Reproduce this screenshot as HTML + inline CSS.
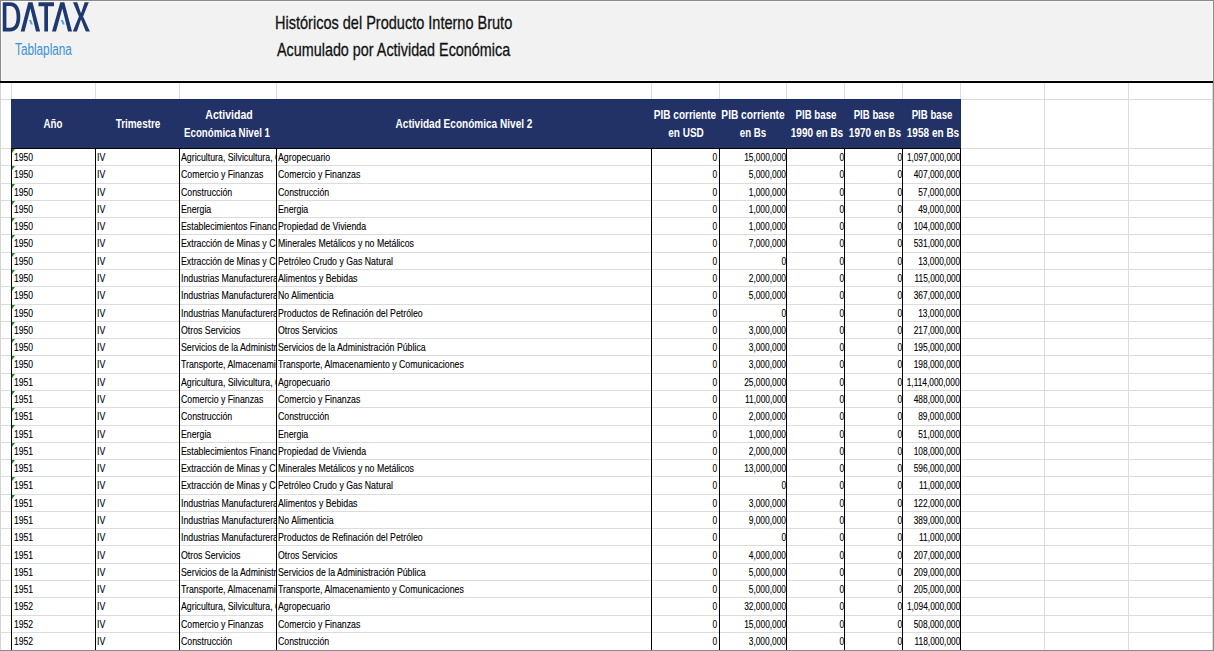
<!DOCTYPE html><html><head><meta charset="utf-8"><style>
*{margin:0;padding:0;box-sizing:border-box}
html,body{width:1214px;height:651px;overflow:hidden;background:#fff}
body{position:relative;font-family:"Liberation Sans",sans-serif;color:#000}
.a{position:absolute}
.hl{position:absolute;height:1px}
.vl{position:absolute;width:1px}
.c{position:absolute;overflow:hidden;white-space:nowrap}
.t{display:inline-block;white-space:nowrap}
.d .t{-webkit-text-stroke:0.12px #000}
.L .t{transform-origin:0 50%}
.R .t{position:absolute;right:0;top:0;transform-origin:100% 50%}
.C .t{position:absolute;left:50%;top:0;transform-origin:0 50%}
</style></head><body>

<div class="a" style="left:0;top:0;width:1214px;height:81px;background:#f2f2f2"></div>
<div class="a" style="left:0;top:0;width:1214px;height:1px;background:#8a8a8a"></div>
<div class="a" style="left:1px;top:1px;width:1212px;height:1px;background:#fbfbfb"></div>
<div class="a" style="left:0;top:0;width:1px;height:81px;background:#8a8a8a"></div>
<div class="a" style="left:1px;top:1px;width:1px;height:80px;background:#fbfbfb"></div>
<div class="a" style="left:1px;top:80px;width:1212px;height:1px;background:#fbfbfb"></div>
<div class="a" style="left:1212px;top:1px;width:1px;height:80px;background:#fbfbfb"></div>
<div class="a" style="left:0;top:81px;width:1214px;height:2px;background:#000"></div>
<svg class="a" style="left:0;top:0" width="100" height="40" viewBox="0 0 100 40">
<g fill="#1f386f">
<path d="M2.8 2.2 H10 C17 2.2 20.3 8 20.3 16.9 C20.3 25.8 17 31.5 10 31.5 H2.8 Z M6.4 6 V27.7 H10 C14.6 27.7 16.6 23.5 16.6 16.9 C16.6 10.2 14.6 6 10 6 Z"/>
<path d="M28.3 2.2 H32.5 L40.1 31.5 H36 L30.4 8.5 L24.6 31.5 H20.7 Z"/>
<path d="M38.5 2.2 H54 V6.3 H48 V31.5 H44.3 V6.3 H38.5 Z"/>
<path d="M60.3 2.2 H64.3 L72 31.5 H68 L62.3 8.5 L56 31.5 H52 Z"/>
<path d="M73 2.2 H77.2 L81 13.3 L84.7 2.2 H88.8 L83.1 16.5 L89.9 31.5 H85.8 L81 19.6 L76.9 31.5 H72.8 L78.9 16.5 Z"/>
</g>
<g fill="#3aa3e6">
<path d="M29.0 20.0 L31.0 20.0 L32.9 24.5 L30.9 24.5 Z"/>
<path d="M60.9 20.0 L62.9 20.0 L64.7 24.6 L62.7 24.6 Z"/>
</g>
</svg>
<div class="c L" style="left:15px;top:42.26px;width:120px;height:16.00px;line-height:16px;font-size:16px;color:#3b93d3;overflow:visible;"><span class="t" style="transform:scaleX(0.735)">Tablaplana</span></div>
<div class="c L" style="left:275px;top:12.72px;width:400px;height:19.00px;line-height:19px;font-size:19px;color:#111;overflow:visible;-webkit-text-stroke:0.3px #111;"><span class="t" style="transform:scaleX(0.764)">Históricos del Producto Interno Bruto</span></div>
<div class="c L" style="left:277px;top:40.02px;width:400px;height:19.00px;line-height:19px;font-size:19px;color:#111;overflow:visible;-webkit-text-stroke:0.3px #111;"><span class="t" style="transform:scaleX(0.756)">Acumulado por Actividad Económica</span></div>
<div class="hl" style="left:1px;top:99px;width:1212px;background:#dcdcdc"></div>
<div class="hl" style="left:1px;top:148px;width:1212px;background:#dcdcdc"></div>
<div class="hl" style="left:1px;top:165px;width:1212px;background:#dcdcdc"></div>
<div class="hl" style="left:1px;top:183px;width:1212px;background:#dcdcdc"></div>
<div class="hl" style="left:1px;top:200px;width:1212px;background:#dcdcdc"></div>
<div class="hl" style="left:1px;top:217px;width:1212px;background:#dcdcdc"></div>
<div class="hl" style="left:1px;top:234px;width:1212px;background:#dcdcdc"></div>
<div class="hl" style="left:1px;top:252px;width:1212px;background:#dcdcdc"></div>
<div class="hl" style="left:1px;top:269px;width:1212px;background:#dcdcdc"></div>
<div class="hl" style="left:1px;top:286px;width:1212px;background:#dcdcdc"></div>
<div class="hl" style="left:1px;top:304px;width:1212px;background:#dcdcdc"></div>
<div class="hl" style="left:1px;top:321px;width:1212px;background:#dcdcdc"></div>
<div class="hl" style="left:1px;top:338px;width:1212px;background:#dcdcdc"></div>
<div class="hl" style="left:1px;top:355px;width:1212px;background:#dcdcdc"></div>
<div class="hl" style="left:1px;top:373px;width:1212px;background:#dcdcdc"></div>
<div class="hl" style="left:1px;top:390px;width:1212px;background:#dcdcdc"></div>
<div class="hl" style="left:1px;top:407px;width:1212px;background:#dcdcdc"></div>
<div class="hl" style="left:1px;top:425px;width:1212px;background:#dcdcdc"></div>
<div class="hl" style="left:1px;top:442px;width:1212px;background:#dcdcdc"></div>
<div class="hl" style="left:1px;top:459px;width:1212px;background:#dcdcdc"></div>
<div class="hl" style="left:1px;top:476px;width:1212px;background:#dcdcdc"></div>
<div class="hl" style="left:1px;top:494px;width:1212px;background:#dcdcdc"></div>
<div class="hl" style="left:1px;top:511px;width:1212px;background:#dcdcdc"></div>
<div class="hl" style="left:1px;top:528px;width:1212px;background:#dcdcdc"></div>
<div class="hl" style="left:1px;top:545px;width:1212px;background:#dcdcdc"></div>
<div class="hl" style="left:1px;top:563px;width:1212px;background:#dcdcdc"></div>
<div class="hl" style="left:1px;top:580px;width:1212px;background:#dcdcdc"></div>
<div class="hl" style="left:1px;top:597px;width:1212px;background:#dcdcdc"></div>
<div class="hl" style="left:1px;top:615px;width:1212px;background:#dcdcdc"></div>
<div class="hl" style="left:1px;top:632px;width:1212px;background:#dcdcdc"></div>
<div class="vl" style="left:11px;top:83px;height:567px;background:#dcdcdc"></div>
<div class="vl" style="left:95px;top:83px;height:567px;background:#dcdcdc"></div>
<div class="vl" style="left:179px;top:83px;height:567px;background:#dcdcdc"></div>
<div class="vl" style="left:276px;top:83px;height:567px;background:#dcdcdc"></div>
<div class="vl" style="left:651px;top:83px;height:567px;background:#dcdcdc"></div>
<div class="vl" style="left:719px;top:83px;height:567px;background:#dcdcdc"></div>
<div class="vl" style="left:786px;top:83px;height:567px;background:#dcdcdc"></div>
<div class="vl" style="left:844px;top:83px;height:567px;background:#dcdcdc"></div>
<div class="vl" style="left:902px;top:83px;height:567px;background:#dcdcdc"></div>
<div class="vl" style="left:960px;top:83px;height:567px;background:#dcdcdc"></div>
<div class="vl" style="left:1044px;top:83px;height:567px;background:#dcdcdc"></div>
<div class="vl" style="left:1128px;top:83px;height:567px;background:#dcdcdc"></div>
<div class="vl" style="left:1212px;top:83px;height:567px;background:#dcdcdc"></div>
<div class="a" style="left:11px;top:99px;width:950px;height:49px;background:#223267"></div>
<div class="a" style="left:11px;top:99px;width:950px;height:1px;background:#1a2b63"></div>
<div class="a" style="left:960px;top:99px;width:1px;height:49px;background:#1a2b63"></div>
<div class="a" style="left:11px;top:148px;width:950px;height:1px;background:#000"></div>
<div class="vl" style="left:11px;top:148px;height:502px;background:#000"></div>
<div class="vl" style="left:95px;top:148px;height:502px;background:#000"></div>
<div class="vl" style="left:179px;top:148px;height:502px;background:#000"></div>
<div class="vl" style="left:276px;top:148px;height:502px;background:#000"></div>
<div class="vl" style="left:651px;top:148px;height:502px;background:#000"></div>
<div class="vl" style="left:719px;top:148px;height:502px;background:#000"></div>
<div class="vl" style="left:786px;top:148px;height:502px;background:#000"></div>
<div class="vl" style="left:844px;top:148px;height:502px;background:#000"></div>
<div class="vl" style="left:902px;top:148px;height:502px;background:#000"></div>
<div class="vl" style="left:960px;top:148px;height:502px;background:#000"></div>
<div class="c C" style="left:10.8px;top:118.24px;width:84px;height:12.00px;line-height:12.0px;font-size:12.0px;color:#fff;font-weight:bold;"><span class="t" style="transform:scaleX(0.8117) translateX(-50%)">Año</span></div>
<div class="c C" style="left:96px;top:118.24px;width:84px;height:12.00px;line-height:12.0px;font-size:12.0px;color:#fff;font-weight:bold;"><span class="t" style="transform:scaleX(0.8279) translateX(-50%)">Trimestre</span></div>
<div class="c C" style="left:180.0px;top:109.34px;width:97px;height:12.00px;line-height:12.0px;font-size:12.0px;color:#fff;font-weight:bold;"><span class="t" style="transform:scaleX(0.8755) translateX(-50%)">Actividad</span></div>
<div class="c C" style="left:178.3px;top:127.24px;width:97px;height:12.00px;line-height:12.0px;font-size:12.0px;color:#fff;font-weight:bold;"><span class="t" style="transform:scaleX(0.8105) translateX(-50%)">Económica Nivel 1</span></div>
<div class="c C" style="left:276.6px;top:118.24px;width:375px;height:12.00px;line-height:12.0px;font-size:12.0px;color:#fff;font-weight:bold;"><span class="t" style="transform:scaleX(0.8372) translateX(-50%)">Actividad Económica Nivel 2</span></div>
<div class="c C" style="left:651.4px;top:109.34px;width:68px;height:12.00px;line-height:12.0px;font-size:12.0px;color:#fff;font-weight:bold;"><span class="t" style="transform:scaleX(0.8338) translateX(-50%)">PIB corriente</span></div>
<div class="c C" style="left:651.6px;top:127.24px;width:68px;height:12.00px;line-height:12.0px;font-size:12.0px;color:#fff;font-weight:bold;"><span class="t" style="transform:scaleX(0.8338) translateX(-50%)">en USD</span></div>
<div class="c C" style="left:719.7px;top:109.34px;width:67px;height:12.00px;line-height:12.0px;font-size:12.0px;color:#fff;font-weight:bold;"><span class="t" style="transform:scaleX(0.8474) translateX(-50%)">PIB corriente</span></div>
<div class="c C" style="left:719.5px;top:127.24px;width:67px;height:12.00px;line-height:12.0px;font-size:12.0px;color:#fff;font-weight:bold;"><span class="t" style="transform:scaleX(0.8075) translateX(-50%)">en Bs</span></div>
<div class="c C" style="left:787.3px;top:109.34px;width:58px;height:12.00px;line-height:12.0px;font-size:12.0px;color:#fff;font-weight:bold;"><span class="t" style="transform:scaleX(0.8075) translateX(-50%)">PIB base</span></div>
<div class="c C" style="left:788px;top:127.24px;width:58px;height:12.00px;line-height:12.0px;font-size:12.0px;color:#fff;font-weight:bold;"><span class="t" style="transform:scaleX(0.8356) translateX(-50%)">1990 en Bs</span></div>
<div class="c C" style="left:845.3px;top:109.34px;width:58px;height:12.00px;line-height:12.0px;font-size:12.0px;color:#fff;font-weight:bold;"><span class="t" style="transform:scaleX(0.8015) translateX(-50%)">PIB base</span></div>
<div class="c C" style="left:845.9px;top:127.24px;width:58px;height:12.00px;line-height:12.0px;font-size:12.0px;color:#fff;font-weight:bold;"><span class="t" style="transform:scaleX(0.8338) translateX(-50%)">1970 en Bs</span></div>
<div class="c C" style="left:903.3px;top:109.34px;width:58px;height:12.00px;line-height:12.0px;font-size:12.0px;color:#fff;font-weight:bold;"><span class="t" style="transform:scaleX(0.8032) translateX(-50%)">PIB base</span></div>
<div class="c C" style="left:903.8px;top:127.24px;width:58px;height:12.00px;line-height:12.0px;font-size:12.0px;color:#fff;font-weight:bold;"><span class="t" style="transform:scaleX(0.8356) translateX(-50%)">1958 en Bs</span></div>
<div class="c L d" style="left:13.5px;top:152.07px;width:82px;height:11.00px;line-height:11.0px;font-size:11.0px;"><span class="t" style="transform:scaleX(0.78)">1950</span></div>
<div class="c L d" style="left:97px;top:152.07px;width:82px;height:11.00px;line-height:11.0px;font-size:11.0px;"><span class="t" style="transform:scaleX(0.797)">IV</span></div>
<div class="c L d" style="left:181px;top:152.07px;width:95px;height:11.00px;line-height:11.0px;font-size:11.0px;"><span class="t" style="transform:scaleX(0.797)">Agricultura, Silvicultura, Caza y Pesca</span></div>
<div class="c L d" style="left:278px;top:152.07px;width:373px;height:11.00px;line-height:11.0px;font-size:11.0px;"><span class="t" style="transform:scaleX(0.797)">Agropecuario</span></div>
<div class="c R d" style="left:652px;top:152.07px;width:65.5px;height:11.00px;line-height:11.0px;font-size:11.0px;"><span class="t" style="transform:scaleX(0.76)">0</span></div>
<div class="c R d" style="left:720px;top:152.07px;width:66.0px;height:11.00px;line-height:11.0px;font-size:11.0px;"><span class="t" style="transform:scaleX(0.76)">15,000,000</span></div>
<div class="c R d" style="left:787px;top:152.07px;width:57.0px;height:11.00px;line-height:11.0px;font-size:11.0px;"><span class="t" style="transform:scaleX(0.76)">0</span></div>
<div class="c R d" style="left:845px;top:152.07px;width:57.0px;height:11.00px;line-height:11.0px;font-size:11.0px;"><span class="t" style="transform:scaleX(0.76)">0</span></div>
<div class="c R d" style="left:903px;top:152.07px;width:57.0px;height:11.00px;line-height:11.0px;font-size:11.0px;"><span class="t" style="transform:scaleX(0.76)">1,097,000,000</span></div>
<div class="a" style="left:12px;top:149px;width:0;height:0;border-top:4px solid #1a8f1a;border-right:3px solid transparent"></div>
<div class="c L d" style="left:13.5px;top:169.35px;width:82px;height:11.00px;line-height:11.0px;font-size:11.0px;"><span class="t" style="transform:scaleX(0.78)">1950</span></div>
<div class="c L d" style="left:97px;top:169.35px;width:82px;height:11.00px;line-height:11.0px;font-size:11.0px;"><span class="t" style="transform:scaleX(0.797)">IV</span></div>
<div class="c L d" style="left:181px;top:169.35px;width:95px;height:11.00px;line-height:11.0px;font-size:11.0px;"><span class="t" style="transform:scaleX(0.797)">Comercio y Finanzas</span></div>
<div class="c L d" style="left:278px;top:169.35px;width:373px;height:11.00px;line-height:11.0px;font-size:11.0px;"><span class="t" style="transform:scaleX(0.797)">Comercio y Finanzas</span></div>
<div class="c R d" style="left:652px;top:169.35px;width:65.5px;height:11.00px;line-height:11.0px;font-size:11.0px;"><span class="t" style="transform:scaleX(0.76)">0</span></div>
<div class="c R d" style="left:720px;top:169.35px;width:66.0px;height:11.00px;line-height:11.0px;font-size:11.0px;"><span class="t" style="transform:scaleX(0.76)">5,000,000</span></div>
<div class="c R d" style="left:787px;top:169.35px;width:57.0px;height:11.00px;line-height:11.0px;font-size:11.0px;"><span class="t" style="transform:scaleX(0.76)">0</span></div>
<div class="c R d" style="left:845px;top:169.35px;width:57.0px;height:11.00px;line-height:11.0px;font-size:11.0px;"><span class="t" style="transform:scaleX(0.76)">0</span></div>
<div class="c R d" style="left:903px;top:169.35px;width:57.0px;height:11.00px;line-height:11.0px;font-size:11.0px;"><span class="t" style="transform:scaleX(0.76)">407,000,000</span></div>
<div class="a" style="left:12px;top:166px;width:0;height:0;border-top:4px solid #1a8f1a;border-right:3px solid transparent"></div>
<div class="c L d" style="left:13.5px;top:186.63px;width:82px;height:11.00px;line-height:11.0px;font-size:11.0px;"><span class="t" style="transform:scaleX(0.78)">1950</span></div>
<div class="c L d" style="left:97px;top:186.63px;width:82px;height:11.00px;line-height:11.0px;font-size:11.0px;"><span class="t" style="transform:scaleX(0.797)">IV</span></div>
<div class="c L d" style="left:181px;top:186.63px;width:95px;height:11.00px;line-height:11.0px;font-size:11.0px;"><span class="t" style="transform:scaleX(0.797)">Construcción</span></div>
<div class="c L d" style="left:278px;top:186.63px;width:373px;height:11.00px;line-height:11.0px;font-size:11.0px;"><span class="t" style="transform:scaleX(0.797)">Construcción</span></div>
<div class="c R d" style="left:652px;top:186.63px;width:65.5px;height:11.00px;line-height:11.0px;font-size:11.0px;"><span class="t" style="transform:scaleX(0.76)">0</span></div>
<div class="c R d" style="left:720px;top:186.63px;width:66.0px;height:11.00px;line-height:11.0px;font-size:11.0px;"><span class="t" style="transform:scaleX(0.76)">1,000,000</span></div>
<div class="c R d" style="left:787px;top:186.63px;width:57.0px;height:11.00px;line-height:11.0px;font-size:11.0px;"><span class="t" style="transform:scaleX(0.76)">0</span></div>
<div class="c R d" style="left:845px;top:186.63px;width:57.0px;height:11.00px;line-height:11.0px;font-size:11.0px;"><span class="t" style="transform:scaleX(0.76)">0</span></div>
<div class="c R d" style="left:903px;top:186.63px;width:57.0px;height:11.00px;line-height:11.0px;font-size:11.0px;"><span class="t" style="transform:scaleX(0.76)">57,000,000</span></div>
<div class="a" style="left:12px;top:184px;width:0;height:0;border-top:4px solid #1a8f1a;border-right:3px solid transparent"></div>
<div class="c L d" style="left:13.5px;top:203.91px;width:82px;height:11.00px;line-height:11.0px;font-size:11.0px;"><span class="t" style="transform:scaleX(0.78)">1950</span></div>
<div class="c L d" style="left:97px;top:203.91px;width:82px;height:11.00px;line-height:11.0px;font-size:11.0px;"><span class="t" style="transform:scaleX(0.797)">IV</span></div>
<div class="c L d" style="left:181px;top:203.91px;width:95px;height:11.00px;line-height:11.0px;font-size:11.0px;"><span class="t" style="transform:scaleX(0.797)">Energia</span></div>
<div class="c L d" style="left:278px;top:203.91px;width:373px;height:11.00px;line-height:11.0px;font-size:11.0px;"><span class="t" style="transform:scaleX(0.797)">Energia</span></div>
<div class="c R d" style="left:652px;top:203.91px;width:65.5px;height:11.00px;line-height:11.0px;font-size:11.0px;"><span class="t" style="transform:scaleX(0.76)">0</span></div>
<div class="c R d" style="left:720px;top:203.91px;width:66.0px;height:11.00px;line-height:11.0px;font-size:11.0px;"><span class="t" style="transform:scaleX(0.76)">1,000,000</span></div>
<div class="c R d" style="left:787px;top:203.91px;width:57.0px;height:11.00px;line-height:11.0px;font-size:11.0px;"><span class="t" style="transform:scaleX(0.76)">0</span></div>
<div class="c R d" style="left:845px;top:203.91px;width:57.0px;height:11.00px;line-height:11.0px;font-size:11.0px;"><span class="t" style="transform:scaleX(0.76)">0</span></div>
<div class="c R d" style="left:903px;top:203.91px;width:57.0px;height:11.00px;line-height:11.0px;font-size:11.0px;"><span class="t" style="transform:scaleX(0.76)">49,000,000</span></div>
<div class="a" style="left:12px;top:201px;width:0;height:0;border-top:4px solid #1a8f1a;border-right:3px solid transparent"></div>
<div class="c L d" style="left:13.5px;top:221.19px;width:82px;height:11.00px;line-height:11.0px;font-size:11.0px;"><span class="t" style="transform:scaleX(0.78)">1950</span></div>
<div class="c L d" style="left:97px;top:221.19px;width:82px;height:11.00px;line-height:11.0px;font-size:11.0px;"><span class="t" style="transform:scaleX(0.797)">IV</span></div>
<div class="c L d" style="left:181px;top:221.19px;width:95px;height:11.00px;line-height:11.0px;font-size:11.0px;"><span class="t" style="transform:scaleX(0.797)">Establecimientos Financieros</span></div>
<div class="c L d" style="left:278px;top:221.19px;width:373px;height:11.00px;line-height:11.0px;font-size:11.0px;"><span class="t" style="transform:scaleX(0.797)">Propiedad de Vivienda</span></div>
<div class="c R d" style="left:652px;top:221.19px;width:65.5px;height:11.00px;line-height:11.0px;font-size:11.0px;"><span class="t" style="transform:scaleX(0.76)">0</span></div>
<div class="c R d" style="left:720px;top:221.19px;width:66.0px;height:11.00px;line-height:11.0px;font-size:11.0px;"><span class="t" style="transform:scaleX(0.76)">1,000,000</span></div>
<div class="c R d" style="left:787px;top:221.19px;width:57.0px;height:11.00px;line-height:11.0px;font-size:11.0px;"><span class="t" style="transform:scaleX(0.76)">0</span></div>
<div class="c R d" style="left:845px;top:221.19px;width:57.0px;height:11.00px;line-height:11.0px;font-size:11.0px;"><span class="t" style="transform:scaleX(0.76)">0</span></div>
<div class="c R d" style="left:903px;top:221.19px;width:57.0px;height:11.00px;line-height:11.0px;font-size:11.0px;"><span class="t" style="transform:scaleX(0.76)">104,000,000</span></div>
<div class="a" style="left:12px;top:218px;width:0;height:0;border-top:4px solid #1a8f1a;border-right:3px solid transparent"></div>
<div class="c L d" style="left:13.5px;top:238.47px;width:82px;height:11.00px;line-height:11.0px;font-size:11.0px;"><span class="t" style="transform:scaleX(0.78)">1950</span></div>
<div class="c L d" style="left:97px;top:238.47px;width:82px;height:11.00px;line-height:11.0px;font-size:11.0px;"><span class="t" style="transform:scaleX(0.797)">IV</span></div>
<div class="c L d" style="left:181px;top:238.47px;width:95px;height:11.00px;line-height:11.0px;font-size:11.0px;"><span class="t" style="transform:scaleX(0.797)">Extracción de Minas y Canteras</span></div>
<div class="c L d" style="left:278px;top:238.47px;width:373px;height:11.00px;line-height:11.0px;font-size:11.0px;"><span class="t" style="transform:scaleX(0.797)">Minerales Metálicos y no Metálicos</span></div>
<div class="c R d" style="left:652px;top:238.47px;width:65.5px;height:11.00px;line-height:11.0px;font-size:11.0px;"><span class="t" style="transform:scaleX(0.76)">0</span></div>
<div class="c R d" style="left:720px;top:238.47px;width:66.0px;height:11.00px;line-height:11.0px;font-size:11.0px;"><span class="t" style="transform:scaleX(0.76)">7,000,000</span></div>
<div class="c R d" style="left:787px;top:238.47px;width:57.0px;height:11.00px;line-height:11.0px;font-size:11.0px;"><span class="t" style="transform:scaleX(0.76)">0</span></div>
<div class="c R d" style="left:845px;top:238.47px;width:57.0px;height:11.00px;line-height:11.0px;font-size:11.0px;"><span class="t" style="transform:scaleX(0.76)">0</span></div>
<div class="c R d" style="left:903px;top:238.47px;width:57.0px;height:11.00px;line-height:11.0px;font-size:11.0px;"><span class="t" style="transform:scaleX(0.76)">531,000,000</span></div>
<div class="a" style="left:12px;top:235px;width:0;height:0;border-top:4px solid #1a8f1a;border-right:3px solid transparent"></div>
<div class="c L d" style="left:13.5px;top:255.75px;width:82px;height:11.00px;line-height:11.0px;font-size:11.0px;"><span class="t" style="transform:scaleX(0.78)">1950</span></div>
<div class="c L d" style="left:97px;top:255.75px;width:82px;height:11.00px;line-height:11.0px;font-size:11.0px;"><span class="t" style="transform:scaleX(0.797)">IV</span></div>
<div class="c L d" style="left:181px;top:255.75px;width:95px;height:11.00px;line-height:11.0px;font-size:11.0px;"><span class="t" style="transform:scaleX(0.797)">Extracción de Minas y Canteras</span></div>
<div class="c L d" style="left:278px;top:255.75px;width:373px;height:11.00px;line-height:11.0px;font-size:11.0px;"><span class="t" style="transform:scaleX(0.797)">Petróleo Crudo y Gas Natural</span></div>
<div class="c R d" style="left:652px;top:255.75px;width:65.5px;height:11.00px;line-height:11.0px;font-size:11.0px;"><span class="t" style="transform:scaleX(0.76)">0</span></div>
<div class="c R d" style="left:720px;top:255.75px;width:66.0px;height:11.00px;line-height:11.0px;font-size:11.0px;"><span class="t" style="transform:scaleX(0.76)">0</span></div>
<div class="c R d" style="left:787px;top:255.75px;width:57.0px;height:11.00px;line-height:11.0px;font-size:11.0px;"><span class="t" style="transform:scaleX(0.76)">0</span></div>
<div class="c R d" style="left:845px;top:255.75px;width:57.0px;height:11.00px;line-height:11.0px;font-size:11.0px;"><span class="t" style="transform:scaleX(0.76)">0</span></div>
<div class="c R d" style="left:903px;top:255.75px;width:57.0px;height:11.00px;line-height:11.0px;font-size:11.0px;"><span class="t" style="transform:scaleX(0.76)">13,000,000</span></div>
<div class="a" style="left:12px;top:253px;width:0;height:0;border-top:4px solid #1a8f1a;border-right:3px solid transparent"></div>
<div class="c L d" style="left:13.5px;top:273.03px;width:82px;height:11.00px;line-height:11.0px;font-size:11.0px;"><span class="t" style="transform:scaleX(0.78)">1950</span></div>
<div class="c L d" style="left:97px;top:273.03px;width:82px;height:11.00px;line-height:11.0px;font-size:11.0px;"><span class="t" style="transform:scaleX(0.797)">IV</span></div>
<div class="c L d" style="left:181px;top:273.03px;width:95px;height:11.00px;line-height:11.0px;font-size:11.0px;"><span class="t" style="transform:scaleX(0.797)">Industrias Manufactureras</span></div>
<div class="c L d" style="left:278px;top:273.03px;width:373px;height:11.00px;line-height:11.0px;font-size:11.0px;"><span class="t" style="transform:scaleX(0.797)">Alimentos y Bebidas</span></div>
<div class="c R d" style="left:652px;top:273.03px;width:65.5px;height:11.00px;line-height:11.0px;font-size:11.0px;"><span class="t" style="transform:scaleX(0.76)">0</span></div>
<div class="c R d" style="left:720px;top:273.03px;width:66.0px;height:11.00px;line-height:11.0px;font-size:11.0px;"><span class="t" style="transform:scaleX(0.76)">2,000,000</span></div>
<div class="c R d" style="left:787px;top:273.03px;width:57.0px;height:11.00px;line-height:11.0px;font-size:11.0px;"><span class="t" style="transform:scaleX(0.76)">0</span></div>
<div class="c R d" style="left:845px;top:273.03px;width:57.0px;height:11.00px;line-height:11.0px;font-size:11.0px;"><span class="t" style="transform:scaleX(0.76)">0</span></div>
<div class="c R d" style="left:903px;top:273.03px;width:57.0px;height:11.00px;line-height:11.0px;font-size:11.0px;"><span class="t" style="transform:scaleX(0.76)">115,000,000</span></div>
<div class="a" style="left:12px;top:270px;width:0;height:0;border-top:4px solid #1a8f1a;border-right:3px solid transparent"></div>
<div class="c L d" style="left:13.5px;top:290.31px;width:82px;height:11.00px;line-height:11.0px;font-size:11.0px;"><span class="t" style="transform:scaleX(0.78)">1950</span></div>
<div class="c L d" style="left:97px;top:290.31px;width:82px;height:11.00px;line-height:11.0px;font-size:11.0px;"><span class="t" style="transform:scaleX(0.797)">IV</span></div>
<div class="c L d" style="left:181px;top:290.31px;width:95px;height:11.00px;line-height:11.0px;font-size:11.0px;"><span class="t" style="transform:scaleX(0.797)">Industrias Manufactureras</span></div>
<div class="c L d" style="left:278px;top:290.31px;width:373px;height:11.00px;line-height:11.0px;font-size:11.0px;"><span class="t" style="transform:scaleX(0.797)">No Alimenticia</span></div>
<div class="c R d" style="left:652px;top:290.31px;width:65.5px;height:11.00px;line-height:11.0px;font-size:11.0px;"><span class="t" style="transform:scaleX(0.76)">0</span></div>
<div class="c R d" style="left:720px;top:290.31px;width:66.0px;height:11.00px;line-height:11.0px;font-size:11.0px;"><span class="t" style="transform:scaleX(0.76)">5,000,000</span></div>
<div class="c R d" style="left:787px;top:290.31px;width:57.0px;height:11.00px;line-height:11.0px;font-size:11.0px;"><span class="t" style="transform:scaleX(0.76)">0</span></div>
<div class="c R d" style="left:845px;top:290.31px;width:57.0px;height:11.00px;line-height:11.0px;font-size:11.0px;"><span class="t" style="transform:scaleX(0.76)">0</span></div>
<div class="c R d" style="left:903px;top:290.31px;width:57.0px;height:11.00px;line-height:11.0px;font-size:11.0px;"><span class="t" style="transform:scaleX(0.76)">367,000,000</span></div>
<div class="a" style="left:12px;top:287px;width:0;height:0;border-top:4px solid #1a8f1a;border-right:3px solid transparent"></div>
<div class="c L d" style="left:13.5px;top:307.59px;width:82px;height:11.00px;line-height:11.0px;font-size:11.0px;"><span class="t" style="transform:scaleX(0.78)">1950</span></div>
<div class="c L d" style="left:97px;top:307.59px;width:82px;height:11.00px;line-height:11.0px;font-size:11.0px;"><span class="t" style="transform:scaleX(0.797)">IV</span></div>
<div class="c L d" style="left:181px;top:307.59px;width:95px;height:11.00px;line-height:11.0px;font-size:11.0px;"><span class="t" style="transform:scaleX(0.797)">Industrias Manufactureras</span></div>
<div class="c L d" style="left:278px;top:307.59px;width:373px;height:11.00px;line-height:11.0px;font-size:11.0px;"><span class="t" style="transform:scaleX(0.797)">Productos de Refinación del Petróleo</span></div>
<div class="c R d" style="left:652px;top:307.59px;width:65.5px;height:11.00px;line-height:11.0px;font-size:11.0px;"><span class="t" style="transform:scaleX(0.76)">0</span></div>
<div class="c R d" style="left:720px;top:307.59px;width:66.0px;height:11.00px;line-height:11.0px;font-size:11.0px;"><span class="t" style="transform:scaleX(0.76)">0</span></div>
<div class="c R d" style="left:787px;top:307.59px;width:57.0px;height:11.00px;line-height:11.0px;font-size:11.0px;"><span class="t" style="transform:scaleX(0.76)">0</span></div>
<div class="c R d" style="left:845px;top:307.59px;width:57.0px;height:11.00px;line-height:11.0px;font-size:11.0px;"><span class="t" style="transform:scaleX(0.76)">0</span></div>
<div class="c R d" style="left:903px;top:307.59px;width:57.0px;height:11.00px;line-height:11.0px;font-size:11.0px;"><span class="t" style="transform:scaleX(0.76)">13,000,000</span></div>
<div class="a" style="left:12px;top:305px;width:0;height:0;border-top:4px solid #1a8f1a;border-right:3px solid transparent"></div>
<div class="c L d" style="left:13.5px;top:324.87px;width:82px;height:11.00px;line-height:11.0px;font-size:11.0px;"><span class="t" style="transform:scaleX(0.78)">1950</span></div>
<div class="c L d" style="left:97px;top:324.87px;width:82px;height:11.00px;line-height:11.0px;font-size:11.0px;"><span class="t" style="transform:scaleX(0.797)">IV</span></div>
<div class="c L d" style="left:181px;top:324.87px;width:95px;height:11.00px;line-height:11.0px;font-size:11.0px;"><span class="t" style="transform:scaleX(0.797)">Otros Servicios</span></div>
<div class="c L d" style="left:278px;top:324.87px;width:373px;height:11.00px;line-height:11.0px;font-size:11.0px;"><span class="t" style="transform:scaleX(0.797)">Otros Servicios</span></div>
<div class="c R d" style="left:652px;top:324.87px;width:65.5px;height:11.00px;line-height:11.0px;font-size:11.0px;"><span class="t" style="transform:scaleX(0.76)">0</span></div>
<div class="c R d" style="left:720px;top:324.87px;width:66.0px;height:11.00px;line-height:11.0px;font-size:11.0px;"><span class="t" style="transform:scaleX(0.76)">3,000,000</span></div>
<div class="c R d" style="left:787px;top:324.87px;width:57.0px;height:11.00px;line-height:11.0px;font-size:11.0px;"><span class="t" style="transform:scaleX(0.76)">0</span></div>
<div class="c R d" style="left:845px;top:324.87px;width:57.0px;height:11.00px;line-height:11.0px;font-size:11.0px;"><span class="t" style="transform:scaleX(0.76)">0</span></div>
<div class="c R d" style="left:903px;top:324.87px;width:57.0px;height:11.00px;line-height:11.0px;font-size:11.0px;"><span class="t" style="transform:scaleX(0.76)">217,000,000</span></div>
<div class="a" style="left:12px;top:322px;width:0;height:0;border-top:4px solid #1a8f1a;border-right:3px solid transparent"></div>
<div class="c L d" style="left:13.5px;top:342.15px;width:82px;height:11.00px;line-height:11.0px;font-size:11.0px;"><span class="t" style="transform:scaleX(0.78)">1950</span></div>
<div class="c L d" style="left:97px;top:342.15px;width:82px;height:11.00px;line-height:11.0px;font-size:11.0px;"><span class="t" style="transform:scaleX(0.797)">IV</span></div>
<div class="c L d" style="left:181px;top:342.15px;width:95px;height:11.00px;line-height:11.0px;font-size:11.0px;"><span class="t" style="transform:scaleX(0.797)">Servicios de la Administración Pública</span></div>
<div class="c L d" style="left:278px;top:342.15px;width:373px;height:11.00px;line-height:11.0px;font-size:11.0px;"><span class="t" style="transform:scaleX(0.797)">Servicios de la Administración Pública</span></div>
<div class="c R d" style="left:652px;top:342.15px;width:65.5px;height:11.00px;line-height:11.0px;font-size:11.0px;"><span class="t" style="transform:scaleX(0.76)">0</span></div>
<div class="c R d" style="left:720px;top:342.15px;width:66.0px;height:11.00px;line-height:11.0px;font-size:11.0px;"><span class="t" style="transform:scaleX(0.76)">3,000,000</span></div>
<div class="c R d" style="left:787px;top:342.15px;width:57.0px;height:11.00px;line-height:11.0px;font-size:11.0px;"><span class="t" style="transform:scaleX(0.76)">0</span></div>
<div class="c R d" style="left:845px;top:342.15px;width:57.0px;height:11.00px;line-height:11.0px;font-size:11.0px;"><span class="t" style="transform:scaleX(0.76)">0</span></div>
<div class="c R d" style="left:903px;top:342.15px;width:57.0px;height:11.00px;line-height:11.0px;font-size:11.0px;"><span class="t" style="transform:scaleX(0.76)">195,000,000</span></div>
<div class="a" style="left:12px;top:339px;width:0;height:0;border-top:4px solid #1a8f1a;border-right:3px solid transparent"></div>
<div class="c L d" style="left:13.5px;top:359.43px;width:82px;height:11.00px;line-height:11.0px;font-size:11.0px;"><span class="t" style="transform:scaleX(0.78)">1950</span></div>
<div class="c L d" style="left:97px;top:359.43px;width:82px;height:11.00px;line-height:11.0px;font-size:11.0px;"><span class="t" style="transform:scaleX(0.797)">IV</span></div>
<div class="c L d" style="left:181px;top:359.43px;width:95px;height:11.00px;line-height:11.0px;font-size:11.0px;"><span class="t" style="transform:scaleX(0.797)">Transporte, Almacenamiento y Comunicaciones</span></div>
<div class="c L d" style="left:278px;top:359.43px;width:373px;height:11.00px;line-height:11.0px;font-size:11.0px;"><span class="t" style="transform:scaleX(0.797)">Transporte, Almacenamiento y Comunicaciones</span></div>
<div class="c R d" style="left:652px;top:359.43px;width:65.5px;height:11.00px;line-height:11.0px;font-size:11.0px;"><span class="t" style="transform:scaleX(0.76)">0</span></div>
<div class="c R d" style="left:720px;top:359.43px;width:66.0px;height:11.00px;line-height:11.0px;font-size:11.0px;"><span class="t" style="transform:scaleX(0.76)">3,000,000</span></div>
<div class="c R d" style="left:787px;top:359.43px;width:57.0px;height:11.00px;line-height:11.0px;font-size:11.0px;"><span class="t" style="transform:scaleX(0.76)">0</span></div>
<div class="c R d" style="left:845px;top:359.43px;width:57.0px;height:11.00px;line-height:11.0px;font-size:11.0px;"><span class="t" style="transform:scaleX(0.76)">0</span></div>
<div class="c R d" style="left:903px;top:359.43px;width:57.0px;height:11.00px;line-height:11.0px;font-size:11.0px;"><span class="t" style="transform:scaleX(0.76)">198,000,000</span></div>
<div class="a" style="left:12px;top:356px;width:0;height:0;border-top:4px solid #1a8f1a;border-right:3px solid transparent"></div>
<div class="c L d" style="left:13.5px;top:376.71px;width:82px;height:11.00px;line-height:11.0px;font-size:11.0px;"><span class="t" style="transform:scaleX(0.78)">1951</span></div>
<div class="c L d" style="left:97px;top:376.71px;width:82px;height:11.00px;line-height:11.0px;font-size:11.0px;"><span class="t" style="transform:scaleX(0.797)">IV</span></div>
<div class="c L d" style="left:181px;top:376.71px;width:95px;height:11.00px;line-height:11.0px;font-size:11.0px;"><span class="t" style="transform:scaleX(0.797)">Agricultura, Silvicultura, Caza y Pesca</span></div>
<div class="c L d" style="left:278px;top:376.71px;width:373px;height:11.00px;line-height:11.0px;font-size:11.0px;"><span class="t" style="transform:scaleX(0.797)">Agropecuario</span></div>
<div class="c R d" style="left:652px;top:376.71px;width:65.5px;height:11.00px;line-height:11.0px;font-size:11.0px;"><span class="t" style="transform:scaleX(0.76)">0</span></div>
<div class="c R d" style="left:720px;top:376.71px;width:66.0px;height:11.00px;line-height:11.0px;font-size:11.0px;"><span class="t" style="transform:scaleX(0.76)">25,000,000</span></div>
<div class="c R d" style="left:787px;top:376.71px;width:57.0px;height:11.00px;line-height:11.0px;font-size:11.0px;"><span class="t" style="transform:scaleX(0.76)">0</span></div>
<div class="c R d" style="left:845px;top:376.71px;width:57.0px;height:11.00px;line-height:11.0px;font-size:11.0px;"><span class="t" style="transform:scaleX(0.76)">0</span></div>
<div class="c R d" style="left:903px;top:376.71px;width:57.0px;height:11.00px;line-height:11.0px;font-size:11.0px;"><span class="t" style="transform:scaleX(0.76)">1,114,000,000</span></div>
<div class="a" style="left:12px;top:374px;width:0;height:0;border-top:4px solid #1a8f1a;border-right:3px solid transparent"></div>
<div class="c L d" style="left:13.5px;top:393.99px;width:82px;height:11.00px;line-height:11.0px;font-size:11.0px;"><span class="t" style="transform:scaleX(0.78)">1951</span></div>
<div class="c L d" style="left:97px;top:393.99px;width:82px;height:11.00px;line-height:11.0px;font-size:11.0px;"><span class="t" style="transform:scaleX(0.797)">IV</span></div>
<div class="c L d" style="left:181px;top:393.99px;width:95px;height:11.00px;line-height:11.0px;font-size:11.0px;"><span class="t" style="transform:scaleX(0.797)">Comercio y Finanzas</span></div>
<div class="c L d" style="left:278px;top:393.99px;width:373px;height:11.00px;line-height:11.0px;font-size:11.0px;"><span class="t" style="transform:scaleX(0.797)">Comercio y Finanzas</span></div>
<div class="c R d" style="left:652px;top:393.99px;width:65.5px;height:11.00px;line-height:11.0px;font-size:11.0px;"><span class="t" style="transform:scaleX(0.76)">0</span></div>
<div class="c R d" style="left:720px;top:393.99px;width:66.0px;height:11.00px;line-height:11.0px;font-size:11.0px;"><span class="t" style="transform:scaleX(0.76)">11,000,000</span></div>
<div class="c R d" style="left:787px;top:393.99px;width:57.0px;height:11.00px;line-height:11.0px;font-size:11.0px;"><span class="t" style="transform:scaleX(0.76)">0</span></div>
<div class="c R d" style="left:845px;top:393.99px;width:57.0px;height:11.00px;line-height:11.0px;font-size:11.0px;"><span class="t" style="transform:scaleX(0.76)">0</span></div>
<div class="c R d" style="left:903px;top:393.99px;width:57.0px;height:11.00px;line-height:11.0px;font-size:11.0px;"><span class="t" style="transform:scaleX(0.76)">488,000,000</span></div>
<div class="a" style="left:12px;top:391px;width:0;height:0;border-top:4px solid #1a8f1a;border-right:3px solid transparent"></div>
<div class="c L d" style="left:13.5px;top:411.27px;width:82px;height:11.00px;line-height:11.0px;font-size:11.0px;"><span class="t" style="transform:scaleX(0.78)">1951</span></div>
<div class="c L d" style="left:97px;top:411.27px;width:82px;height:11.00px;line-height:11.0px;font-size:11.0px;"><span class="t" style="transform:scaleX(0.797)">IV</span></div>
<div class="c L d" style="left:181px;top:411.27px;width:95px;height:11.00px;line-height:11.0px;font-size:11.0px;"><span class="t" style="transform:scaleX(0.797)">Construcción</span></div>
<div class="c L d" style="left:278px;top:411.27px;width:373px;height:11.00px;line-height:11.0px;font-size:11.0px;"><span class="t" style="transform:scaleX(0.797)">Construcción</span></div>
<div class="c R d" style="left:652px;top:411.27px;width:65.5px;height:11.00px;line-height:11.0px;font-size:11.0px;"><span class="t" style="transform:scaleX(0.76)">0</span></div>
<div class="c R d" style="left:720px;top:411.27px;width:66.0px;height:11.00px;line-height:11.0px;font-size:11.0px;"><span class="t" style="transform:scaleX(0.76)">2,000,000</span></div>
<div class="c R d" style="left:787px;top:411.27px;width:57.0px;height:11.00px;line-height:11.0px;font-size:11.0px;"><span class="t" style="transform:scaleX(0.76)">0</span></div>
<div class="c R d" style="left:845px;top:411.27px;width:57.0px;height:11.00px;line-height:11.0px;font-size:11.0px;"><span class="t" style="transform:scaleX(0.76)">0</span></div>
<div class="c R d" style="left:903px;top:411.27px;width:57.0px;height:11.00px;line-height:11.0px;font-size:11.0px;"><span class="t" style="transform:scaleX(0.76)">89,000,000</span></div>
<div class="a" style="left:12px;top:408px;width:0;height:0;border-top:4px solid #1a8f1a;border-right:3px solid transparent"></div>
<div class="c L d" style="left:13.5px;top:428.55px;width:82px;height:11.00px;line-height:11.0px;font-size:11.0px;"><span class="t" style="transform:scaleX(0.78)">1951</span></div>
<div class="c L d" style="left:97px;top:428.55px;width:82px;height:11.00px;line-height:11.0px;font-size:11.0px;"><span class="t" style="transform:scaleX(0.797)">IV</span></div>
<div class="c L d" style="left:181px;top:428.55px;width:95px;height:11.00px;line-height:11.0px;font-size:11.0px;"><span class="t" style="transform:scaleX(0.797)">Energia</span></div>
<div class="c L d" style="left:278px;top:428.55px;width:373px;height:11.00px;line-height:11.0px;font-size:11.0px;"><span class="t" style="transform:scaleX(0.797)">Energia</span></div>
<div class="c R d" style="left:652px;top:428.55px;width:65.5px;height:11.00px;line-height:11.0px;font-size:11.0px;"><span class="t" style="transform:scaleX(0.76)">0</span></div>
<div class="c R d" style="left:720px;top:428.55px;width:66.0px;height:11.00px;line-height:11.0px;font-size:11.0px;"><span class="t" style="transform:scaleX(0.76)">1,000,000</span></div>
<div class="c R d" style="left:787px;top:428.55px;width:57.0px;height:11.00px;line-height:11.0px;font-size:11.0px;"><span class="t" style="transform:scaleX(0.76)">0</span></div>
<div class="c R d" style="left:845px;top:428.55px;width:57.0px;height:11.00px;line-height:11.0px;font-size:11.0px;"><span class="t" style="transform:scaleX(0.76)">0</span></div>
<div class="c R d" style="left:903px;top:428.55px;width:57.0px;height:11.00px;line-height:11.0px;font-size:11.0px;"><span class="t" style="transform:scaleX(0.76)">51,000,000</span></div>
<div class="a" style="left:12px;top:425px;width:0;height:0;border-top:4px solid #1a8f1a;border-right:3px solid transparent"></div>
<div class="c L d" style="left:13.5px;top:445.83px;width:82px;height:11.00px;line-height:11.0px;font-size:11.0px;"><span class="t" style="transform:scaleX(0.78)">1951</span></div>
<div class="c L d" style="left:97px;top:445.83px;width:82px;height:11.00px;line-height:11.0px;font-size:11.0px;"><span class="t" style="transform:scaleX(0.797)">IV</span></div>
<div class="c L d" style="left:181px;top:445.83px;width:95px;height:11.00px;line-height:11.0px;font-size:11.0px;"><span class="t" style="transform:scaleX(0.797)">Establecimientos Financieros</span></div>
<div class="c L d" style="left:278px;top:445.83px;width:373px;height:11.00px;line-height:11.0px;font-size:11.0px;"><span class="t" style="transform:scaleX(0.797)">Propiedad de Vivienda</span></div>
<div class="c R d" style="left:652px;top:445.83px;width:65.5px;height:11.00px;line-height:11.0px;font-size:11.0px;"><span class="t" style="transform:scaleX(0.76)">0</span></div>
<div class="c R d" style="left:720px;top:445.83px;width:66.0px;height:11.00px;line-height:11.0px;font-size:11.0px;"><span class="t" style="transform:scaleX(0.76)">2,000,000</span></div>
<div class="c R d" style="left:787px;top:445.83px;width:57.0px;height:11.00px;line-height:11.0px;font-size:11.0px;"><span class="t" style="transform:scaleX(0.76)">0</span></div>
<div class="c R d" style="left:845px;top:445.83px;width:57.0px;height:11.00px;line-height:11.0px;font-size:11.0px;"><span class="t" style="transform:scaleX(0.76)">0</span></div>
<div class="c R d" style="left:903px;top:445.83px;width:57.0px;height:11.00px;line-height:11.0px;font-size:11.0px;"><span class="t" style="transform:scaleX(0.76)">108,000,000</span></div>
<div class="a" style="left:12px;top:443px;width:0;height:0;border-top:4px solid #1a8f1a;border-right:3px solid transparent"></div>
<div class="c L d" style="left:13.5px;top:463.11px;width:82px;height:11.00px;line-height:11.0px;font-size:11.0px;"><span class="t" style="transform:scaleX(0.78)">1951</span></div>
<div class="c L d" style="left:97px;top:463.11px;width:82px;height:11.00px;line-height:11.0px;font-size:11.0px;"><span class="t" style="transform:scaleX(0.797)">IV</span></div>
<div class="c L d" style="left:181px;top:463.11px;width:95px;height:11.00px;line-height:11.0px;font-size:11.0px;"><span class="t" style="transform:scaleX(0.797)">Extracción de Minas y Canteras</span></div>
<div class="c L d" style="left:278px;top:463.11px;width:373px;height:11.00px;line-height:11.0px;font-size:11.0px;"><span class="t" style="transform:scaleX(0.797)">Minerales Metálicos y no Metálicos</span></div>
<div class="c R d" style="left:652px;top:463.11px;width:65.5px;height:11.00px;line-height:11.0px;font-size:11.0px;"><span class="t" style="transform:scaleX(0.76)">0</span></div>
<div class="c R d" style="left:720px;top:463.11px;width:66.0px;height:11.00px;line-height:11.0px;font-size:11.0px;"><span class="t" style="transform:scaleX(0.76)">13,000,000</span></div>
<div class="c R d" style="left:787px;top:463.11px;width:57.0px;height:11.00px;line-height:11.0px;font-size:11.0px;"><span class="t" style="transform:scaleX(0.76)">0</span></div>
<div class="c R d" style="left:845px;top:463.11px;width:57.0px;height:11.00px;line-height:11.0px;font-size:11.0px;"><span class="t" style="transform:scaleX(0.76)">0</span></div>
<div class="c R d" style="left:903px;top:463.11px;width:57.0px;height:11.00px;line-height:11.0px;font-size:11.0px;"><span class="t" style="transform:scaleX(0.76)">596,000,000</span></div>
<div class="a" style="left:12px;top:460px;width:0;height:0;border-top:4px solid #1a8f1a;border-right:3px solid transparent"></div>
<div class="c L d" style="left:13.5px;top:480.39px;width:82px;height:11.00px;line-height:11.0px;font-size:11.0px;"><span class="t" style="transform:scaleX(0.78)">1951</span></div>
<div class="c L d" style="left:97px;top:480.39px;width:82px;height:11.00px;line-height:11.0px;font-size:11.0px;"><span class="t" style="transform:scaleX(0.797)">IV</span></div>
<div class="c L d" style="left:181px;top:480.39px;width:95px;height:11.00px;line-height:11.0px;font-size:11.0px;"><span class="t" style="transform:scaleX(0.797)">Extracción de Minas y Canteras</span></div>
<div class="c L d" style="left:278px;top:480.39px;width:373px;height:11.00px;line-height:11.0px;font-size:11.0px;"><span class="t" style="transform:scaleX(0.797)">Petróleo Crudo y Gas Natural</span></div>
<div class="c R d" style="left:652px;top:480.39px;width:65.5px;height:11.00px;line-height:11.0px;font-size:11.0px;"><span class="t" style="transform:scaleX(0.76)">0</span></div>
<div class="c R d" style="left:720px;top:480.39px;width:66.0px;height:11.00px;line-height:11.0px;font-size:11.0px;"><span class="t" style="transform:scaleX(0.76)">0</span></div>
<div class="c R d" style="left:787px;top:480.39px;width:57.0px;height:11.00px;line-height:11.0px;font-size:11.0px;"><span class="t" style="transform:scaleX(0.76)">0</span></div>
<div class="c R d" style="left:845px;top:480.39px;width:57.0px;height:11.00px;line-height:11.0px;font-size:11.0px;"><span class="t" style="transform:scaleX(0.76)">0</span></div>
<div class="c R d" style="left:903px;top:480.39px;width:57.0px;height:11.00px;line-height:11.0px;font-size:11.0px;"><span class="t" style="transform:scaleX(0.76)">11,000,000</span></div>
<div class="a" style="left:12px;top:477px;width:0;height:0;border-top:4px solid #1a8f1a;border-right:3px solid transparent"></div>
<div class="c L d" style="left:13.5px;top:497.67px;width:82px;height:11.00px;line-height:11.0px;font-size:11.0px;"><span class="t" style="transform:scaleX(0.78)">1951</span></div>
<div class="c L d" style="left:97px;top:497.67px;width:82px;height:11.00px;line-height:11.0px;font-size:11.0px;"><span class="t" style="transform:scaleX(0.797)">IV</span></div>
<div class="c L d" style="left:181px;top:497.67px;width:95px;height:11.00px;line-height:11.0px;font-size:11.0px;"><span class="t" style="transform:scaleX(0.797)">Industrias Manufactureras</span></div>
<div class="c L d" style="left:278px;top:497.67px;width:373px;height:11.00px;line-height:11.0px;font-size:11.0px;"><span class="t" style="transform:scaleX(0.797)">Alimentos y Bebidas</span></div>
<div class="c R d" style="left:652px;top:497.67px;width:65.5px;height:11.00px;line-height:11.0px;font-size:11.0px;"><span class="t" style="transform:scaleX(0.76)">0</span></div>
<div class="c R d" style="left:720px;top:497.67px;width:66.0px;height:11.00px;line-height:11.0px;font-size:11.0px;"><span class="t" style="transform:scaleX(0.76)">3,000,000</span></div>
<div class="c R d" style="left:787px;top:497.67px;width:57.0px;height:11.00px;line-height:11.0px;font-size:11.0px;"><span class="t" style="transform:scaleX(0.76)">0</span></div>
<div class="c R d" style="left:845px;top:497.67px;width:57.0px;height:11.00px;line-height:11.0px;font-size:11.0px;"><span class="t" style="transform:scaleX(0.76)">0</span></div>
<div class="c R d" style="left:903px;top:497.67px;width:57.0px;height:11.00px;line-height:11.0px;font-size:11.0px;"><span class="t" style="transform:scaleX(0.76)">122,000,000</span></div>
<div class="a" style="left:12px;top:495px;width:0;height:0;border-top:4px solid #1a8f1a;border-right:3px solid transparent"></div>
<div class="c L d" style="left:13.5px;top:514.95px;width:82px;height:11.00px;line-height:11.0px;font-size:11.0px;"><span class="t" style="transform:scaleX(0.78)">1951</span></div>
<div class="c L d" style="left:97px;top:514.95px;width:82px;height:11.00px;line-height:11.0px;font-size:11.0px;"><span class="t" style="transform:scaleX(0.797)">IV</span></div>
<div class="c L d" style="left:181px;top:514.95px;width:95px;height:11.00px;line-height:11.0px;font-size:11.0px;"><span class="t" style="transform:scaleX(0.797)">Industrias Manufactureras</span></div>
<div class="c L d" style="left:278px;top:514.95px;width:373px;height:11.00px;line-height:11.0px;font-size:11.0px;"><span class="t" style="transform:scaleX(0.797)">No Alimenticia</span></div>
<div class="c R d" style="left:652px;top:514.95px;width:65.5px;height:11.00px;line-height:11.0px;font-size:11.0px;"><span class="t" style="transform:scaleX(0.76)">0</span></div>
<div class="c R d" style="left:720px;top:514.95px;width:66.0px;height:11.00px;line-height:11.0px;font-size:11.0px;"><span class="t" style="transform:scaleX(0.76)">9,000,000</span></div>
<div class="c R d" style="left:787px;top:514.95px;width:57.0px;height:11.00px;line-height:11.0px;font-size:11.0px;"><span class="t" style="transform:scaleX(0.76)">0</span></div>
<div class="c R d" style="left:845px;top:514.95px;width:57.0px;height:11.00px;line-height:11.0px;font-size:11.0px;"><span class="t" style="transform:scaleX(0.76)">0</span></div>
<div class="c R d" style="left:903px;top:514.95px;width:57.0px;height:11.00px;line-height:11.0px;font-size:11.0px;"><span class="t" style="transform:scaleX(0.76)">389,000,000</span></div>
<div class="c L d" style="left:13.5px;top:532.23px;width:82px;height:11.00px;line-height:11.0px;font-size:11.0px;"><span class="t" style="transform:scaleX(0.78)">1951</span></div>
<div class="c L d" style="left:97px;top:532.23px;width:82px;height:11.00px;line-height:11.0px;font-size:11.0px;"><span class="t" style="transform:scaleX(0.797)">IV</span></div>
<div class="c L d" style="left:181px;top:532.23px;width:95px;height:11.00px;line-height:11.0px;font-size:11.0px;"><span class="t" style="transform:scaleX(0.797)">Industrias Manufactureras</span></div>
<div class="c L d" style="left:278px;top:532.23px;width:373px;height:11.00px;line-height:11.0px;font-size:11.0px;"><span class="t" style="transform:scaleX(0.797)">Productos de Refinación del Petróleo</span></div>
<div class="c R d" style="left:652px;top:532.23px;width:65.5px;height:11.00px;line-height:11.0px;font-size:11.0px;"><span class="t" style="transform:scaleX(0.76)">0</span></div>
<div class="c R d" style="left:720px;top:532.23px;width:66.0px;height:11.00px;line-height:11.0px;font-size:11.0px;"><span class="t" style="transform:scaleX(0.76)">0</span></div>
<div class="c R d" style="left:787px;top:532.23px;width:57.0px;height:11.00px;line-height:11.0px;font-size:11.0px;"><span class="t" style="transform:scaleX(0.76)">0</span></div>
<div class="c R d" style="left:845px;top:532.23px;width:57.0px;height:11.00px;line-height:11.0px;font-size:11.0px;"><span class="t" style="transform:scaleX(0.76)">0</span></div>
<div class="c R d" style="left:903px;top:532.23px;width:57.0px;height:11.00px;line-height:11.0px;font-size:11.0px;"><span class="t" style="transform:scaleX(0.76)">11,000,000</span></div>
<div class="c L d" style="left:13.5px;top:549.51px;width:82px;height:11.00px;line-height:11.0px;font-size:11.0px;"><span class="t" style="transform:scaleX(0.78)">1951</span></div>
<div class="c L d" style="left:97px;top:549.51px;width:82px;height:11.00px;line-height:11.0px;font-size:11.0px;"><span class="t" style="transform:scaleX(0.797)">IV</span></div>
<div class="c L d" style="left:181px;top:549.51px;width:95px;height:11.00px;line-height:11.0px;font-size:11.0px;"><span class="t" style="transform:scaleX(0.797)">Otros Servicios</span></div>
<div class="c L d" style="left:278px;top:549.51px;width:373px;height:11.00px;line-height:11.0px;font-size:11.0px;"><span class="t" style="transform:scaleX(0.797)">Otros Servicios</span></div>
<div class="c R d" style="left:652px;top:549.51px;width:65.5px;height:11.00px;line-height:11.0px;font-size:11.0px;"><span class="t" style="transform:scaleX(0.76)">0</span></div>
<div class="c R d" style="left:720px;top:549.51px;width:66.0px;height:11.00px;line-height:11.0px;font-size:11.0px;"><span class="t" style="transform:scaleX(0.76)">4,000,000</span></div>
<div class="c R d" style="left:787px;top:549.51px;width:57.0px;height:11.00px;line-height:11.0px;font-size:11.0px;"><span class="t" style="transform:scaleX(0.76)">0</span></div>
<div class="c R d" style="left:845px;top:549.51px;width:57.0px;height:11.00px;line-height:11.0px;font-size:11.0px;"><span class="t" style="transform:scaleX(0.76)">0</span></div>
<div class="c R d" style="left:903px;top:549.51px;width:57.0px;height:11.00px;line-height:11.0px;font-size:11.0px;"><span class="t" style="transform:scaleX(0.76)">207,000,000</span></div>
<div class="c L d" style="left:13.5px;top:566.79px;width:82px;height:11.00px;line-height:11.0px;font-size:11.0px;"><span class="t" style="transform:scaleX(0.78)">1951</span></div>
<div class="c L d" style="left:97px;top:566.79px;width:82px;height:11.00px;line-height:11.0px;font-size:11.0px;"><span class="t" style="transform:scaleX(0.797)">IV</span></div>
<div class="c L d" style="left:181px;top:566.79px;width:95px;height:11.00px;line-height:11.0px;font-size:11.0px;"><span class="t" style="transform:scaleX(0.797)">Servicios de la Administración Pública</span></div>
<div class="c L d" style="left:278px;top:566.79px;width:373px;height:11.00px;line-height:11.0px;font-size:11.0px;"><span class="t" style="transform:scaleX(0.797)">Servicios de la Administración Pública</span></div>
<div class="c R d" style="left:652px;top:566.79px;width:65.5px;height:11.00px;line-height:11.0px;font-size:11.0px;"><span class="t" style="transform:scaleX(0.76)">0</span></div>
<div class="c R d" style="left:720px;top:566.79px;width:66.0px;height:11.00px;line-height:11.0px;font-size:11.0px;"><span class="t" style="transform:scaleX(0.76)">5,000,000</span></div>
<div class="c R d" style="left:787px;top:566.79px;width:57.0px;height:11.00px;line-height:11.0px;font-size:11.0px;"><span class="t" style="transform:scaleX(0.76)">0</span></div>
<div class="c R d" style="left:845px;top:566.79px;width:57.0px;height:11.00px;line-height:11.0px;font-size:11.0px;"><span class="t" style="transform:scaleX(0.76)">0</span></div>
<div class="c R d" style="left:903px;top:566.79px;width:57.0px;height:11.00px;line-height:11.0px;font-size:11.0px;"><span class="t" style="transform:scaleX(0.76)">209,000,000</span></div>
<div class="c L d" style="left:13.5px;top:584.07px;width:82px;height:11.00px;line-height:11.0px;font-size:11.0px;"><span class="t" style="transform:scaleX(0.78)">1951</span></div>
<div class="c L d" style="left:97px;top:584.07px;width:82px;height:11.00px;line-height:11.0px;font-size:11.0px;"><span class="t" style="transform:scaleX(0.797)">IV</span></div>
<div class="c L d" style="left:181px;top:584.07px;width:95px;height:11.00px;line-height:11.0px;font-size:11.0px;"><span class="t" style="transform:scaleX(0.797)">Transporte, Almacenamiento y Comunicaciones</span></div>
<div class="c L d" style="left:278px;top:584.07px;width:373px;height:11.00px;line-height:11.0px;font-size:11.0px;"><span class="t" style="transform:scaleX(0.797)">Transporte, Almacenamiento y Comunicaciones</span></div>
<div class="c R d" style="left:652px;top:584.07px;width:65.5px;height:11.00px;line-height:11.0px;font-size:11.0px;"><span class="t" style="transform:scaleX(0.76)">0</span></div>
<div class="c R d" style="left:720px;top:584.07px;width:66.0px;height:11.00px;line-height:11.0px;font-size:11.0px;"><span class="t" style="transform:scaleX(0.76)">5,000,000</span></div>
<div class="c R d" style="left:787px;top:584.07px;width:57.0px;height:11.00px;line-height:11.0px;font-size:11.0px;"><span class="t" style="transform:scaleX(0.76)">0</span></div>
<div class="c R d" style="left:845px;top:584.07px;width:57.0px;height:11.00px;line-height:11.0px;font-size:11.0px;"><span class="t" style="transform:scaleX(0.76)">0</span></div>
<div class="c R d" style="left:903px;top:584.07px;width:57.0px;height:11.00px;line-height:11.0px;font-size:11.0px;"><span class="t" style="transform:scaleX(0.76)">205,000,000</span></div>
<div class="c L d" style="left:13.5px;top:601.35px;width:82px;height:11.00px;line-height:11.0px;font-size:11.0px;"><span class="t" style="transform:scaleX(0.78)">1952</span></div>
<div class="c L d" style="left:97px;top:601.35px;width:82px;height:11.00px;line-height:11.0px;font-size:11.0px;"><span class="t" style="transform:scaleX(0.797)">IV</span></div>
<div class="c L d" style="left:181px;top:601.35px;width:95px;height:11.00px;line-height:11.0px;font-size:11.0px;"><span class="t" style="transform:scaleX(0.797)">Agricultura, Silvicultura, Caza y Pesca</span></div>
<div class="c L d" style="left:278px;top:601.35px;width:373px;height:11.00px;line-height:11.0px;font-size:11.0px;"><span class="t" style="transform:scaleX(0.797)">Agropecuario</span></div>
<div class="c R d" style="left:652px;top:601.35px;width:65.5px;height:11.00px;line-height:11.0px;font-size:11.0px;"><span class="t" style="transform:scaleX(0.76)">0</span></div>
<div class="c R d" style="left:720px;top:601.35px;width:66.0px;height:11.00px;line-height:11.0px;font-size:11.0px;"><span class="t" style="transform:scaleX(0.76)">32,000,000</span></div>
<div class="c R d" style="left:787px;top:601.35px;width:57.0px;height:11.00px;line-height:11.0px;font-size:11.0px;"><span class="t" style="transform:scaleX(0.76)">0</span></div>
<div class="c R d" style="left:845px;top:601.35px;width:57.0px;height:11.00px;line-height:11.0px;font-size:11.0px;"><span class="t" style="transform:scaleX(0.76)">0</span></div>
<div class="c R d" style="left:903px;top:601.35px;width:57.0px;height:11.00px;line-height:11.0px;font-size:11.0px;"><span class="t" style="transform:scaleX(0.76)">1,094,000,000</span></div>
<div class="c L d" style="left:13.5px;top:618.63px;width:82px;height:11.00px;line-height:11.0px;font-size:11.0px;"><span class="t" style="transform:scaleX(0.78)">1952</span></div>
<div class="c L d" style="left:97px;top:618.63px;width:82px;height:11.00px;line-height:11.0px;font-size:11.0px;"><span class="t" style="transform:scaleX(0.797)">IV</span></div>
<div class="c L d" style="left:181px;top:618.63px;width:95px;height:11.00px;line-height:11.0px;font-size:11.0px;"><span class="t" style="transform:scaleX(0.797)">Comercio y Finanzas</span></div>
<div class="c L d" style="left:278px;top:618.63px;width:373px;height:11.00px;line-height:11.0px;font-size:11.0px;"><span class="t" style="transform:scaleX(0.797)">Comercio y Finanzas</span></div>
<div class="c R d" style="left:652px;top:618.63px;width:65.5px;height:11.00px;line-height:11.0px;font-size:11.0px;"><span class="t" style="transform:scaleX(0.76)">0</span></div>
<div class="c R d" style="left:720px;top:618.63px;width:66.0px;height:11.00px;line-height:11.0px;font-size:11.0px;"><span class="t" style="transform:scaleX(0.76)">15,000,000</span></div>
<div class="c R d" style="left:787px;top:618.63px;width:57.0px;height:11.00px;line-height:11.0px;font-size:11.0px;"><span class="t" style="transform:scaleX(0.76)">0</span></div>
<div class="c R d" style="left:845px;top:618.63px;width:57.0px;height:11.00px;line-height:11.0px;font-size:11.0px;"><span class="t" style="transform:scaleX(0.76)">0</span></div>
<div class="c R d" style="left:903px;top:618.63px;width:57.0px;height:11.00px;line-height:11.0px;font-size:11.0px;"><span class="t" style="transform:scaleX(0.76)">508,000,000</span></div>
<div class="c L d" style="left:13.5px;top:635.91px;width:82px;height:11.00px;line-height:11.0px;font-size:11.0px;"><span class="t" style="transform:scaleX(0.78)">1952</span></div>
<div class="c L d" style="left:97px;top:635.91px;width:82px;height:11.00px;line-height:11.0px;font-size:11.0px;"><span class="t" style="transform:scaleX(0.797)">IV</span></div>
<div class="c L d" style="left:181px;top:635.91px;width:95px;height:11.00px;line-height:11.0px;font-size:11.0px;"><span class="t" style="transform:scaleX(0.797)">Construcción</span></div>
<div class="c L d" style="left:278px;top:635.91px;width:373px;height:11.00px;line-height:11.0px;font-size:11.0px;"><span class="t" style="transform:scaleX(0.797)">Construcción</span></div>
<div class="c R d" style="left:652px;top:635.91px;width:65.5px;height:11.00px;line-height:11.0px;font-size:11.0px;"><span class="t" style="transform:scaleX(0.76)">0</span></div>
<div class="c R d" style="left:720px;top:635.91px;width:66.0px;height:11.00px;line-height:11.0px;font-size:11.0px;"><span class="t" style="transform:scaleX(0.76)">3,000,000</span></div>
<div class="c R d" style="left:787px;top:635.91px;width:57.0px;height:11.00px;line-height:11.0px;font-size:11.0px;"><span class="t" style="transform:scaleX(0.76)">0</span></div>
<div class="c R d" style="left:845px;top:635.91px;width:57.0px;height:11.00px;line-height:11.0px;font-size:11.0px;"><span class="t" style="transform:scaleX(0.76)">0</span></div>
<div class="c R d" style="left:903px;top:635.91px;width:57.0px;height:11.00px;line-height:11.0px;font-size:11.0px;"><span class="t" style="transform:scaleX(0.76)">118,000,000</span></div>
<div class="a" style="left:0;top:83px;width:1px;height:568px;background:#d4d4d4"></div>
<div class="a" style="left:1213px;top:0;width:1px;height:651px;background:#8a8a8a"></div>
<div class="a" style="left:0;top:650px;width:1214px;height:1px;background:#8a8a8a"></div>
</body></html>
